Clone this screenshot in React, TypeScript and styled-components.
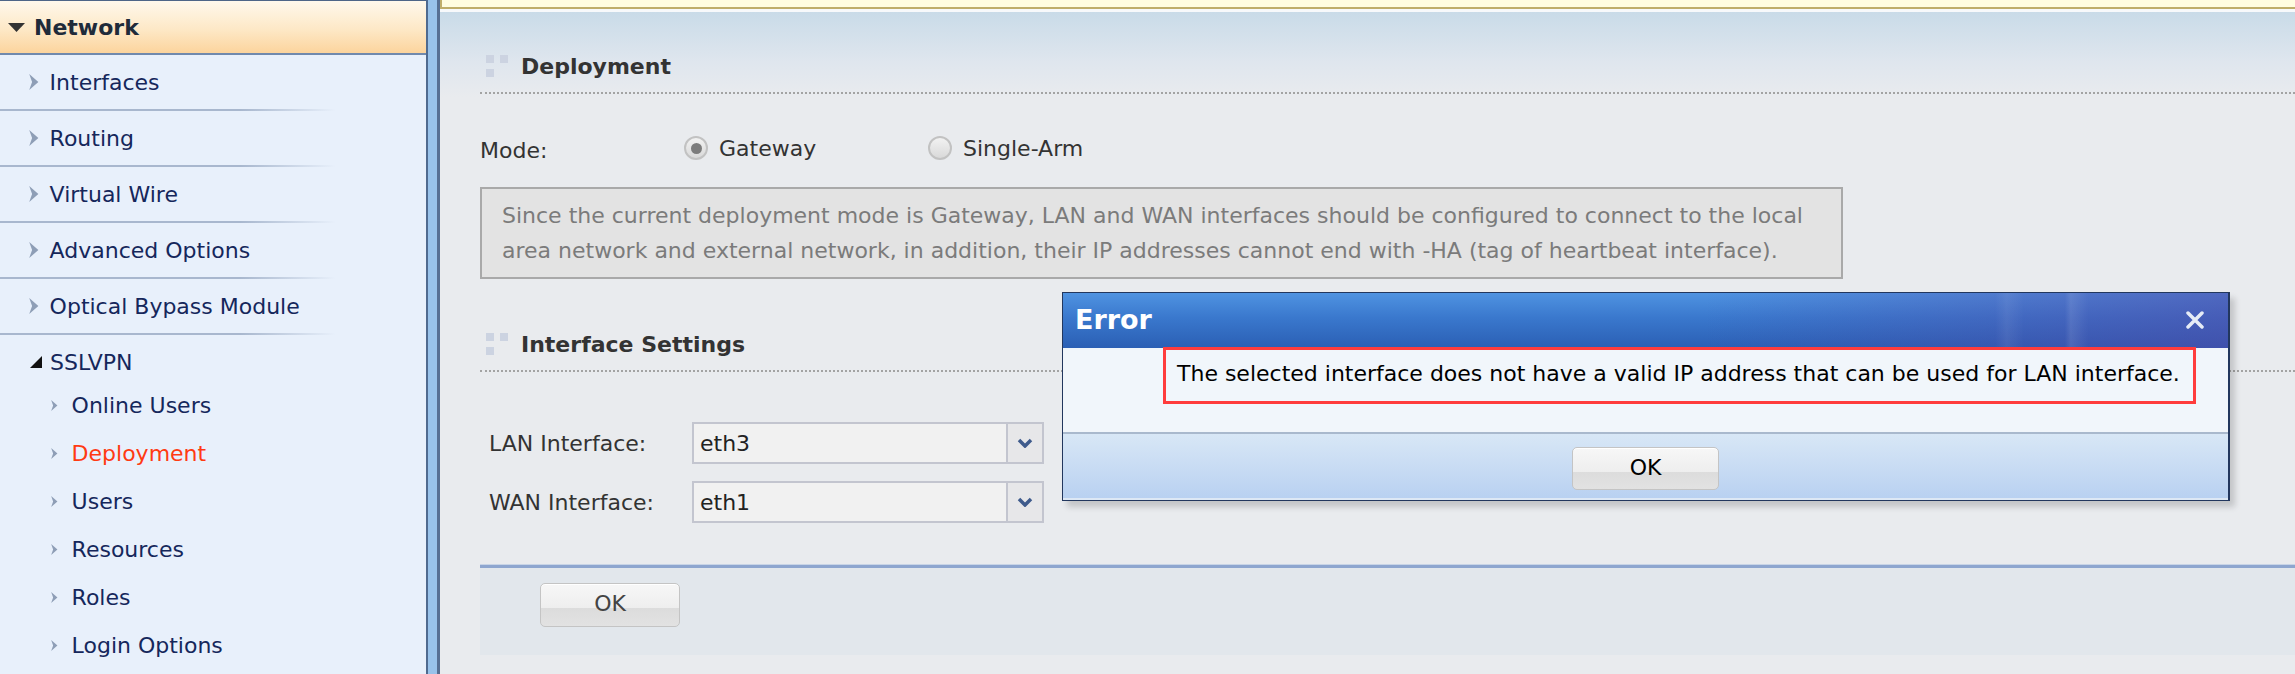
import React, { useState } from 'react';
import styled, { createGlobalStyle } from 'styled-components';

const NAV_ITEMS = ['Interfaces', 'Routing', 'Virtual Wire', 'Advanced Options', 'Optical Bypass Module'];
const SSL_ITEMS = ['Online Users', 'Deployment', 'Users', 'Resources', 'Roles', 'Login Options'];

const GlobalStyle = createGlobalStyle`
  html, body {
    margin: 0;
    padding: 0;
    background: #e9ebee;
  }
  body {
    font-family: "DejaVu Sans", Verdana, sans-serif;
  }
  * {
    box-sizing: border-box;
  }
`;

const Page = styled.div`
  position: relative;
  display: flex;
  width: 2295px;
  height: 674px;
  overflow: hidden;
`;

/* ---------- sidebar ---------- */

const Sidebar = styled.nav`
  width: 426px;
  flex-shrink: 0;
  background: #e8f0fb;
  color: #15275b;
  font-size: 22px;
`;

const GroupHeader = styled.div`
  height: 55px;
  display: flex;
  align-items: center;
  gap: 9px;
  padding-left: 8px;
  border-top: 1px solid #4e6587;
  border-bottom: 2px solid #7089ad;
  background: linear-gradient(#fff8ec 0%, #fde8c6 55%, #fcd49d 100%);
  font-weight: bold;
  color: #1f2b3a;
`;

const NavItem = styled.div`
  height: 56px;
  display: flex;
  align-items: center;
  gap: 11px;
  padding-left: 29px;
  border-bottom: 2px solid;
  border-image: linear-gradient(to right, #a8b7ce 0px, #a8b7ce 240px, rgba(168, 183, 206, 0) 335px, rgba(168, 183, 206, 0) 100%) 1;
`;

const SubGroup = styled.div`
  margin-top: 8px;
  height: 38px;
  display: flex;
  align-items: center;
  gap: 8px;
  padding-left: 30px;
`;

const SubItem = styled.div<{ $active?: boolean }>`
  height: 48px;
  display: flex;
  align-items: center;
  gap: 14px;
  padding-left: 51px;
  color: ${(p) => (p.$active ? '#ff3a12' : '#15275b')};
`;

const Splitter = styled.div`
  width: 14px;
  flex-shrink: 0;
  border-left: 2px solid #4f6a8f;
  border-right: 3px solid #566f93;
  background: #98c2ea;
`;

/* ---------- main content ---------- */

const Main = styled.main`
  flex: 1;
  display: flex;
  flex-direction: column;
  background: #e9ebee;
`;

const NoticeBar = styled.div`
  height: 9px;
  flex-shrink: 0;
  background: #fffde0;
  border-left: 2px solid #bfae6a;
  border-bottom: 2px solid #bfae6a;
`;

const Content = styled.div`
  flex: 1;
  padding-left: 40px;
  border-top: 3px solid #f7f9fb;
  background: linear-gradient(#c9dbe8 0px, #dfe6ee 50px, #e9ebee 85px);
  color: #333;
  font-size: 22px;
`;

const SectionHeader = styled.div<{ $top: number }>`
  margin-top: ${(p) => p.$top}px;
  height: 54px;
  display: flex;
  align-items: center;
  gap: 13px;
  padding-left: 6px;
  border-bottom: 2px dotted #a3a3a3;
`;

const SectionIcon = styled.div`
  display: grid;
  grid-template-columns: 8px 8px;
  grid-template-rows: 8px 8px;
  gap: 6px;
  span {
    background: #ccd3e1;
  }
`;

const SectionTitle = styled.h3`
  margin: 0;
  font-size: 22px;
  font-weight: bold;
  color: #333;
`;

const ModeRow = styled.div`
  margin-top: 36px;
  height: 36px;
  display: flex;
  align-items: center;
`;

const ModeLabel = styled.span`
  width: 204px;
  padding-top: 5px;
`;

const RadioOption = styled.label`
  min-width: 244px;
  display: flex;
  align-items: center;
  gap: 11px;
`;

const RadioCircle = styled.span<{ $checked?: boolean }>`
  width: 24px;
  height: 24px;
  border-radius: 50%;
  border: 2px solid #c2c2c2;
  background: linear-gradient(#f2f2f2, #d9d9d9);
  display: flex;
  align-items: center;
  justify-content: center;
  &::after {
    content: '';
    width: 11px;
    height: 11px;
    border-radius: 50%;
    background: ${(p) => (p.$checked ? '#7c7c7c' : 'transparent')};
  }
`;

const InfoBox = styled.div`
  margin-top: 21px;
  width: 1363px;
  padding: 9px 20px;
  border: 2px solid #a9a9a9;
  background: #e3e3e3;
  color: #7b7b7b;
  line-height: 35px;
  white-space: nowrap;
`;

const FieldRow = styled.div<{ $top: number }>`
  margin-top: ${(p) => p.$top}px;
  height: 42px;
  display: flex;
  align-items: center;
  padding-left: 9px;
`;

const FieldLabel = styled.span`
  width: 203px;
`;

const SelectBox = styled.div`
  width: 352px;
  height: 42px;
  display: flex;
  border: 2px solid #c3c5cf;
  background: #f1f1f1;
`;

const SelectValue = styled.span`
  flex: 1;
  display: flex;
  align-items: center;
  padding-left: 6px;
  color: #222;
`;

const SelectButton = styled.span`
  width: 36px;
  display: flex;
  align-items: center;
  justify-content: center;
  border-left: 2px solid #c3c5cf;
  background: #e7e7e9;
`;

const Footer = styled.div`
  margin-top: 42px;
  height: 90px;
  padding: 15px 0 0 60px;
  border-top: 3px solid #8ea6cf;
  box-shadow: 0 -1px 0 #c8d4e6;
  background: #e2e7ec;
`;

const Button = styled.button<{ $w: number; $h: number; $color: string }>`
  width: ${(p) => p.$w}px;
  height: ${(p) => p.$h}px;
  border: 1px solid #c4c4c4;
  border-radius: 5px;
  background: linear-gradient(#f7f7f7 0%, #eeeeee 58%, #dcdcdc 58%, #e2e2e2 100%);
  box-shadow: inset 0 1px 0 #fff;
  font-family: "DejaVu Sans", Verdana, sans-serif;
  font-size: 22px;
  line-height: 1;
  color: ${(p) => p.$color};
  padding: 0 0 2px;
`;

/* ---------- error dialog ---------- */

const Dialog = styled.div`
  position: absolute;
  left: 1062px;
  top: 292px;
  width: 1168px;
  display: flex;
  flex-direction: column;
  border: 1px solid #22375e;
  border-right-width: 2px;
  box-shadow: 5px 6px 6px rgba(0, 0, 0, 0.16);
`;

const TitleBar = styled.div`
  height: 55px;
  display: flex;
  align-items: center;
  justify-content: space-between;
  padding: 0 24px 2px 12px;
  background:
    linear-gradient(to right, rgba(255, 255, 255, 0) 86%, rgba(255, 255, 255, 0.1) 86.5%, rgba(255, 255, 255, 0) 88%),
    linear-gradient(to right, rgba(255, 255, 255, 0) 80%, rgba(255, 255, 255, 0.07) 81%, rgba(255, 255, 255, 0) 82.5%),
    linear-gradient(to right, rgba(70, 60, 160, 0) 55%, rgba(80, 70, 165, 0.55) 100%),
    linear-gradient(#4f93e1 0%, #3a78cd 45%, #2b5fb4 100%);
`;

const TitleText = styled.span`
  color: #fff;
  font-size: 27px;
  font-weight: bold;
`;

const DialogBody = styled.div`
  height: 84px;
  background: #f1f6fb;
`;

const Message = styled.div`
  margin: -1px 0 0 100px;
  width: 1033px;
  height: 57px;
  display: flex;
  align-items: center;
  padding: 0 0 4px 11px;
  border: 3px solid #ff3c3c;
  color: #000;
  font-size: 22px;
`;

const DialogFooter = styled.div`
  height: 68px;
  display: flex;
  justify-content: center;
  padding-top: 13px;
  border-top: 2px solid #a9b9cd;
  border-bottom: 2px solid #dde8f5;
  background: linear-gradient(#d8e7f6, #b9d1f1);
`;

const RightArrow = ({ size }: { size: number }) => (
  <svg width={size * 0.6} height={size} viewBox="0 0 8 14">
    <polygon points="0,0 8,7 0,14 2.5,7" fill="#8e9eb6" />
  </svg>
);

const ChevronDown = () => (
  <svg width="16" height="10" viewBox="0 0 16 10">
    <polyline points="2,2 8,8 14,2" fill="none" stroke="#3f5b8c" strokeWidth="3.5" />
  </svg>
);

export default function App() {
  const [mode, setMode] = useState('gateway');

  return (
    <Page>
      <GlobalStyle />
      <Sidebar>
        <GroupHeader>
          <svg width="17" height="9" viewBox="0 0 17 9">
            <polygon points="0,0 17,0 8.5,9" fill="#333" />
          </svg>
          Network
        </GroupHeader>
        {NAV_ITEMS.map((item) => (
          <NavItem key={item}>
            <RightArrow size={16} />
            {item}
          </NavItem>
        ))}
        <SubGroup>
          <svg width="12" height="12" viewBox="0 0 12 12">
            <polygon points="12,0 12,12 0,12" fill="#111" />
          </svg>
          SSLVPN
        </SubGroup>
        {SSL_ITEMS.map((item) => (
          <SubItem key={item} $active={item === 'Deployment'}>
            <RightArrow size={11} />
            {item}
          </SubItem>
        ))}
      </Sidebar>

      <Splitter />

      <Main>
        <NoticeBar />
        <Content>
          <SectionHeader $top={28}>
            <SectionIcon>
              <span />
              <span />
              <span />
            </SectionIcon>
            <SectionTitle>Deployment</SectionTitle>
          </SectionHeader>

          <ModeRow>
            <ModeLabel>Mode:</ModeLabel>
            <RadioOption onClick={() => setMode('gateway')}>
              <RadioCircle $checked={mode === 'gateway'} />
              Gateway
            </RadioOption>
            <RadioOption onClick={() => setMode('single')}>
              <RadioCircle $checked={mode === 'single'} />
              Single-Arm
            </RadioOption>
          </ModeRow>

          <InfoBox>
            Since the current deployment mode is Gateway, LAN and WAN interfaces should be configured to connect to the local
            <br />
            area network and external network, in addition, their IP addresses cannot end with -HA (tag of heartbeat interface).
          </InfoBox>

          <SectionHeader $top={39}>
            <SectionIcon>
              <span />
              <span />
              <span />
            </SectionIcon>
            <SectionTitle>Interface Settings</SectionTitle>
          </SectionHeader>

          <FieldRow $top={50}>
            <FieldLabel>LAN Interface:</FieldLabel>
            <SelectBox>
              <SelectValue>eth3</SelectValue>
              <SelectButton>
                <ChevronDown />
              </SelectButton>
            </SelectBox>
          </FieldRow>

          <FieldRow $top={17}>
            <FieldLabel>WAN Interface:</FieldLabel>
            <SelectBox>
              <SelectValue>eth1</SelectValue>
              <SelectButton>
                <ChevronDown />
              </SelectButton>
            </SelectBox>
          </FieldRow>

          <Footer>
            <Button $w={140} $h={44} $color="#444">OK</Button>
          </Footer>
        </Content>
      </Main>

      <Dialog>
        <TitleBar>
          <TitleText>Error</TitleText>
          <svg width="18" height="18" viewBox="0 0 18 18">
            <path d="M2 2 L16 16 M16 2 L2 16" stroke="#e6ecf6" strokeWidth="3.5" strokeLinecap="round" />
          </svg>
        </TitleBar>
        <DialogBody>
          <Message>The selected interface does not have a valid IP address that can be used for LAN interface.</Message>
        </DialogBody>
        <DialogFooter>
          <Button $w={147} $h={43} $color="#000">OK</Button>
        </DialogFooter>
      </Dialog>
    </Page>
  );
}
